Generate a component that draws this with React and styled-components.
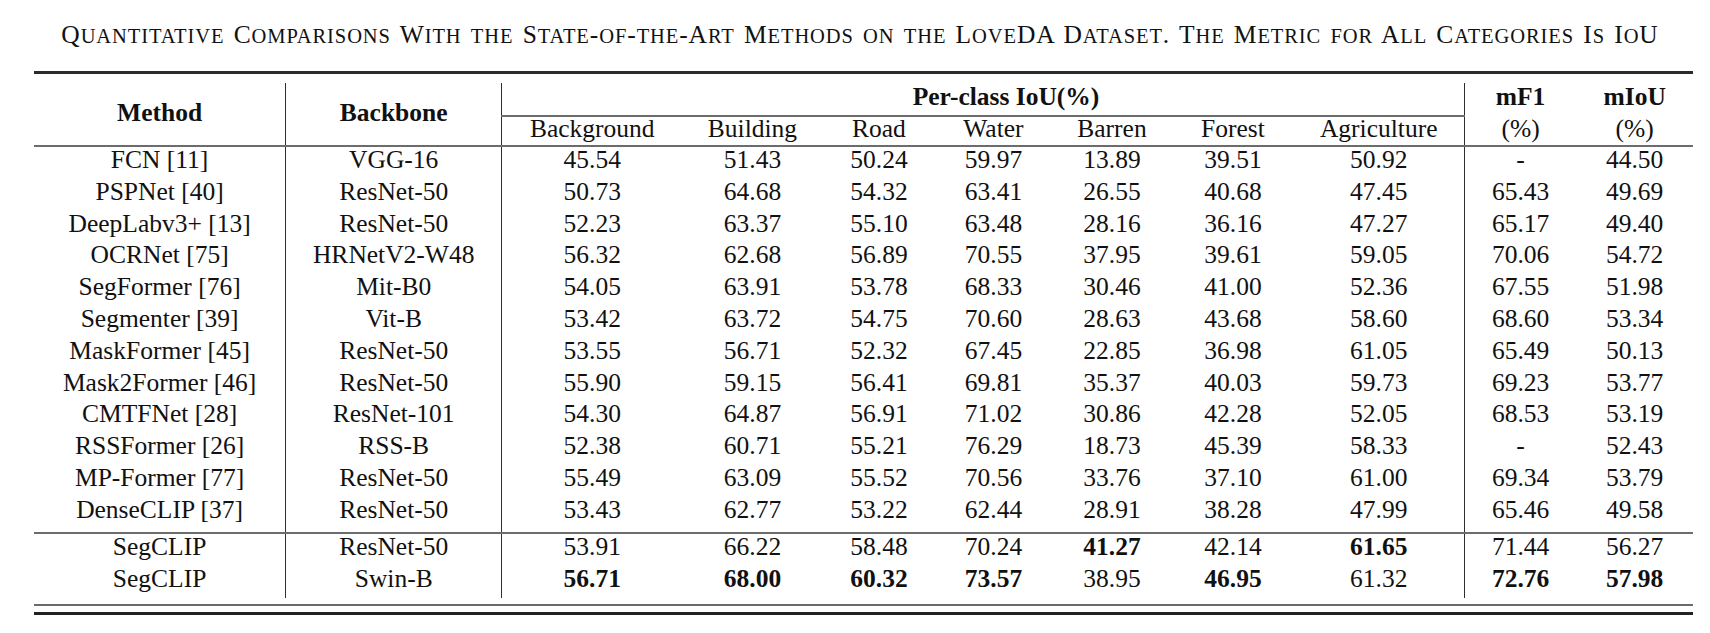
import React from "react";
import styled, { createGlobalStyle } from "styled-components";

const GlobalStyle = createGlobalStyle`
    html, body {
        margin: 0;
        padding: 0;
        background: #ffffff;
    }
    body {
        font-family: "Liberation Serif", "Times New Roman", serif;
        color: #111111;
    }
`;

const Page = styled.div`
    width: 1659px;
    padding: 20px 0 0 34px;
`;

const Caption = styled.div`
    font-size: 25.5px;
    line-height: 30px;
    text-align: center;
    padding-right: 7px;
    white-space: nowrap;
    letter-spacing: 0.9px;
    word-spacing: 2px;
`;

const Small = styled.span`
    font-size: 20.5px;
    text-transform: uppercase;
`;

const TopRule = styled.div`
    margin-top: 20px;
    height: 3px;
    background: #2b2b2b;
`;

const TableArea = styled.div`
    padding: 9px 0 6px;
`;

const Table = styled.table`
    width: 100%;
    table-layout: fixed;
    border-collapse: collapse;
    font-size: 25.5px;
`;

const Cell = styled.td`
    padding: 0 0 ${(p) => (p.$last ? "9.3px" : "5.8px")};
    line-height: 26px;
    text-align: center;
    white-space: nowrap;
    font-weight: ${(p) => (p.$bold ? 700 : 400)};
    border-right: ${(p) => (p.$vline ? "1px solid #2e2e2e" : "none")};
    border-top: ${(p) => (p.$midrule ? "2px solid #6c6c6c" : "none")};
`;

const HeadCell = styled.th`
    padding: 0 0 ${(p) => p.$padBottom || "4px"};
    padding-left: ${(p) => p.$shift || "0"};
    line-height: ${(p) => p.$lh || "28px"};
    text-align: center;
    white-space: nowrap;
    vertical-align: ${(p) => (p.$middle ? "middle" : "baseline")};
    font-weight: ${(p) => (p.$bold ? 700 : 400)};
    border-right: ${(p) => (p.$vline ? "1px solid #2e2e2e" : "none")};
    border-bottom: ${(p) => (p.$hline ? "2px solid #6c6c6c" : "none")};
`;

const BottomRule = styled.div`
    border-top: 2px solid #6a6a6a;
    border-bottom: 3px solid #222;
    height: 6px;
`;

// small caps drawn by hand: lower-case runs become smaller capitals
function SmallCaps({ text }) {
    const parts = text.match(/[a-z]+|[^a-z]+/g) || [];
    return parts.map((p, i) => (/^[a-z]/.test(p) ? <Small key={i}>{p}</Small> : <span key={i}>{p}</span>));
}

const widths = [251.7, 216, 180.6, 140.4, 112.6, 116.4, 120.6, 121.4, 170.6, 112, 116.7];

const classes = ["Background", "Building", "Road", "Water", "Barren", "Forest", "Agriculture"];

// last item of a row: indices of values (0..8) printed in bold
const rows = [
    ["FCN [11]", "VGG-16", ["45.54", "51.43", "50.24", "59.97", "13.89", "39.51", "50.92", "-", "44.50"]],
    ["PSPNet [40]", "ResNet-50", ["50.73", "64.68", "54.32", "63.41", "26.55", "40.68", "47.45", "65.43", "49.69"]],
    ["DeepLabv3+ [13]", "ResNet-50", ["52.23", "63.37", "55.10", "63.48", "28.16", "36.16", "47.27", "65.17", "49.40"]],
    ["OCRNet [75]", "HRNetV2-W48", ["56.32", "62.68", "56.89", "70.55", "37.95", "39.61", "59.05", "70.06", "54.72"]],
    ["SegFormer [76]", "Mit-B0", ["54.05", "63.91", "53.78", "68.33", "30.46", "41.00", "52.36", "67.55", "51.98"]],
    ["Segmenter [39]", "Vit-B", ["53.42", "63.72", "54.75", "70.60", "28.63", "43.68", "58.60", "68.60", "53.34"]],
    ["MaskFormer [45]", "ResNet-50", ["53.55", "56.71", "52.32", "67.45", "22.85", "36.98", "61.05", "65.49", "50.13"]],
    ["Mask2Former [46]", "ResNet-50", ["55.90", "59.15", "56.41", "69.81", "35.37", "40.03", "59.73", "69.23", "53.77"]],
    ["CMTFNet [28]", "ResNet-101", ["54.30", "64.87", "56.91", "71.02", "30.86", "42.28", "52.05", "68.53", "53.19"]],
    ["RSSFormer [26]", "RSS-B", ["52.38", "60.71", "55.21", "76.29", "18.73", "45.39", "58.33", "-", "52.43"]],
    ["MP-Former [77]", "ResNet-50", ["55.49", "63.09", "55.52", "70.56", "33.76", "37.10", "61.00", "69.34", "53.79"]],
    ["DenseCLIP [37]", "ResNet-50", ["53.43", "62.77", "53.22", "62.44", "28.91", "38.28", "47.99", "65.46", "49.58"], [], { last: true }],
    ["SegCLIP", "ResNet-50", ["53.91", "66.22", "58.48", "70.24", "41.27", "42.14", "61.65", "71.44", "56.27"], [4, 6], { midrule: true }],
    ["SegCLIP", "Swin-B", ["56.71", "68.00", "60.32", "73.57", "38.95", "46.95", "61.32", "72.76", "57.98"], [0, 1, 2, 3, 5, 7, 8]],
];

function BodyRow({ method, backbone, values, bold = [], flags = {} }) {
    const common = { $last: flags.last, $midrule: flags.midrule };
    return (
        <tr>
            <Cell {...common} $vline>{method}</Cell>
            <Cell {...common} $vline>{backbone}</Cell>
            {values.map((v, i) => (
                <Cell key={i} {...common} $bold={bold.includes(i)} $vline={i === 6}>
                    {v}
                </Cell>
            ))}
        </tr>
    );
}

export default function App() {
    return (
        <>
            <GlobalStyle />
            <Page>
                <Caption>
                    <SmallCaps text="Quantitative Comparisons With the State-of-the-Art Methods on the LoveDA Dataset. The Metric for All Categories Is IoU" />
                </Caption>
                <TopRule />
                <TableArea>
                    <Table>
                        <colgroup>
                            {widths.map((w, i) => (
                                <col key={i} style={{ width: w }} />
                            ))}
                        </colgroup>
                        <thead>
                            <tr>
                                <HeadCell rowSpan={2} $bold $middle $vline $hline $padBottom="2px">Method</HeadCell>
                                <HeadCell rowSpan={2} $bold $middle $vline $hline $padBottom="2px">Backbone</HeadCell>
                                <HeadCell colSpan={7} $bold $vline $hline $shift="46px">Per-class IoU(%)</HeadCell>
                                <HeadCell $bold>mF1</HeadCell>
                                <HeadCell $bold>mIoU</HeadCell>
                            </tr>
                            <tr>
                                {classes.map((c, i) => (
                                    <HeadCell key={c} $hline $lh="24px" $padBottom="4px" $vline={i === 6}>
                                        {c}
                                    </HeadCell>
                                ))}
                                <HeadCell $hline $lh="24px" $padBottom="4px">(%)</HeadCell>
                                <HeadCell $hline $lh="24px" $padBottom="4px">(%)</HeadCell>
                            </tr>
                        </thead>
                        <tbody>
                            {rows.map(([m, b, v, bold, flags], i) => (
                                <BodyRow key={i} method={m} backbone={b} values={v} bold={bold} flags={flags} />
                            ))}
                        </tbody>
                    </Table>
                </TableArea>
                <BottomRule />
            </Page>
        </>
    );
}
